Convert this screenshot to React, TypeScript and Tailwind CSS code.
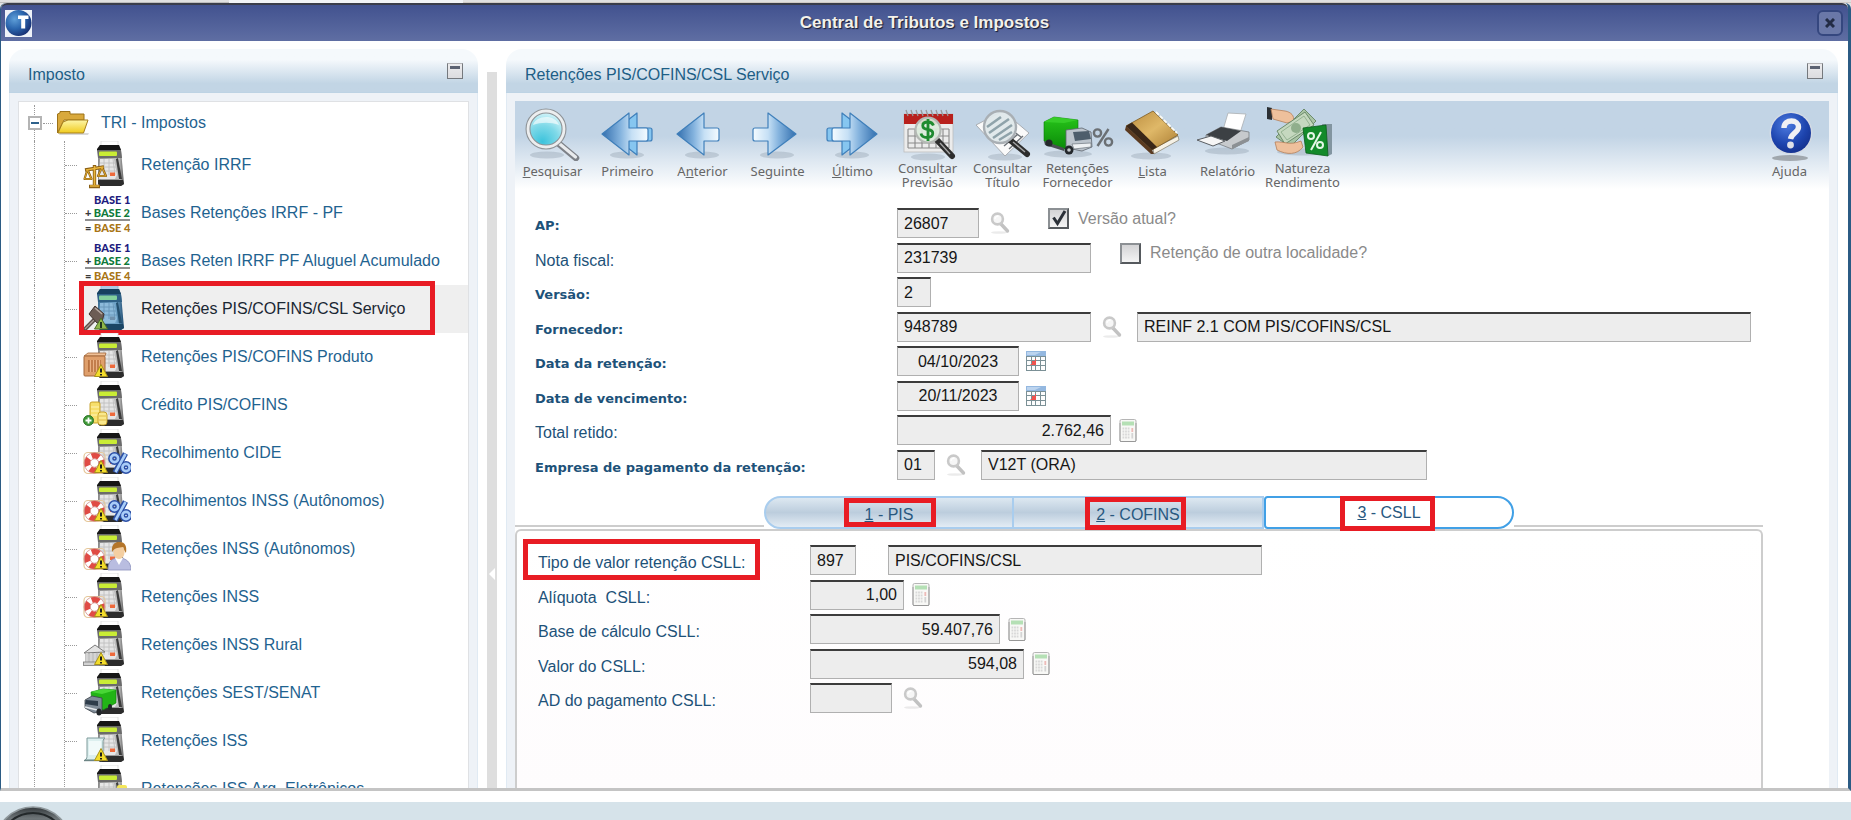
import type { ReactNode } from "react";

type Badge =
  | "scale"
  | "hammer"
  | "crate"
  | "coins"
  | "percent"
  | "person"
  | "buoy"
  | "bank"
  | "truck"
  | "scroll"
  | "files";

type TreeItem = { label: string; icon: "bases" | Badge; selected?: boolean };

const TREE: TreeItem[] = [
  { label: "Retenção IRRF", icon: "scale" },
  { label: "Bases Retenções IRRF - PF", icon: "bases" },
  { label: "Bases Reten IRRF PF Aluguel Acumulado", icon: "bases" },
  { label: "Retenções PIS/COFINS/CSL Serviço", icon: "hammer", selected: true },
  { label: "Retenções PIS/COFINS Produto", icon: "crate" },
  { label: "Crédito PIS/COFINS", icon: "coins" },
  { label: "Recolhimento CIDE", icon: "percent" },
  { label: "Recolhimentos INSS (Autônomos)", icon: "percent" },
  { label: "Retenções INSS (Autônomos)", icon: "person" },
  { label: "Retenções INSS", icon: "buoy" },
  { label: "Retenções INSS Rural", icon: "bank" },
  { label: "Retenções SEST/SENAT", icon: "truck" },
  { label: "Retenções ISS", icon: "scroll" },
  { label: "Retenções ISS Arq. Eletrônicos", icon: "files" },
];

/* ---------- shared gradients ---------- */

function Gradients() {
  return (
    <svg className="absolute h-0 w-0" aria-hidden="true">
      <defs>
        <linearGradient id="arrowFwd" x1="0" x2="1">
          <stop offset="0" stopColor="#f4fbff" />
          <stop offset="0.35" stopColor="#c6e0f5" />
          <stop offset="0.6" stopColor="#84b3de" />
          <stop offset="1" stopColor="#336fae" />
        </linearGradient>
        <linearGradient id="arrowBack" x1="1" x2="0">
          <stop offset="0" stopColor="#f4fbff" />
          <stop offset="0.35" stopColor="#c6e0f5" />
          <stop offset="0.6" stopColor="#84b3de" />
          <stop offset="1" stopColor="#336fae" />
        </linearGradient>
        <radialGradient id="lens" cx="0.4" cy="0.85" r="0.9">
          <stop offset="0" stopColor="#3cc3dc" />
          <stop offset="0.5" stopColor="#7fd9e8" />
          <stop offset="1" stopColor="#e6fafd" />
        </radialGradient>
        <linearGradient id="greenBox" x1="0" y1="0" x2="0" y2="1">
          <stop offset="0" stopColor="#27c41a" />
          <stop offset="1" stopColor="#0a8a08" />
        </linearGradient>
        <linearGradient id="bookCover" x1="0" y1="0" x2="1" y2="1">
          <stop offset="0" stopColor="#b98a3c" />
          <stop offset="0.5" stopColor="#dfb868" />
          <stop offset="1" stopColor="#a87a30" />
        </linearGradient>
        <radialGradient id="helpBall" cx="0.4" cy="0.3" r="0.8">
          <stop offset="0" stopColor="#4d7be0" />
          <stop offset="0.6" stopColor="#1d44ae" />
          <stop offset="1" stopColor="#122c86" />
        </radialGradient>
        <linearGradient id="folderFront" x1="0" y1="0" x2="0" y2="1">
          <stop offset="0" stopColor="#fdf6a8" />
          <stop offset="1" stopColor="#f0cb1e" />
        </linearGradient>
        <linearGradient id="posBody" x1="0" x2="1">
          <stop offset="0" stopColor="#8a8a8a" />
          <stop offset="0.8" stopColor="#c4c4c4" />
          <stop offset="1" stopColor="#5a5a5a" />
        </linearGradient>
        <linearGradient id="posBodyBlue" x1="0" x2="1">
          <stop offset="0" stopColor="#3f7196" />
          <stop offset="0.7" stopColor="#6fa3c8" />
          <stop offset="1" stopColor="#1f4c70" />
        </linearGradient>
        <radialGradient id="globe" cx="0.35" cy="0.35" r="0.75">
          <stop offset="0" stopColor="#5f9fd8" />
          <stop offset="0.5" stopColor="#2b66ae" />
          <stop offset="1" stopColor="#14286a" />
        </radialGradient>
        <linearGradient id="badgeBall" x1="0" y1="0" x2="0" y2="1">
          <stop offset="0" stopColor="#33383b" />
          <stop offset="0.15" stopColor="#6e7578" />
          <stop offset="0.45" stopColor="#3c4245" />
          <stop offset="1" stopColor="#16191b" />
        </linearGradient>
      </defs>
    </svg>
  );
}

/* ---------- tree icons ---------- */

function Warning() {
  return (
    <g>
      <path d="M18 31.500 L24.500 43.500 H11.500 Z" fill="#f3dd2b" stroke="#a8921a" strokeWidth="1" strokeLinejoin="round" />
      <path d="M18 35.500v4M18 41v1.600" stroke="#1c1c1c" strokeWidth="2" />
    </g>
  );
}

function Buoy() {
  return (
    <g>
      <rect x="1" y="23.500" width="21" height="21" rx="4" fill="none" stroke="#e5c79a" strokeWidth="1.200" />
      <circle cx="11.500" cy="34" r="7.300" fill="none" stroke="#fff" strokeWidth="6.400" />
      <circle cx="11.500" cy="34" r="7.300" fill="none" stroke="#e04b44" strokeWidth="5.800" strokeDasharray="7.600 3.870" strokeDashoffset="3" />
      <circle cx="11.500" cy="34" r="10.400" fill="none" stroke="#c9807a" strokeWidth="0.700" />
      <circle cx="11.500" cy="34" r="4.200" fill="none" stroke="#c9807a" strokeWidth="0.700" />
    </g>
  );
}

function BadgeArt({ kind }: { kind: Badge }) {
  switch (kind) {
    case "scale":
      return (
        <g fill="none" stroke="#8a5f14" strokeWidth="3.400" strokeLinejoin="round">
          <path d="M11.500 24v20M2 29l19-3M6 45.500h11" />
          <path d="M4.500 28.500L1.500 38h7zM19 26l-4 9h8z" strokeWidth="2.200" />
          <path d="M11.500 25v19M3 29l17.500-3M7 45h9" stroke="#e9b53c" strokeWidth="1.700" />
          <path d="M4.500 29L1.500 38h7zM19 26.500l-4 8.500h8z" stroke="#e0a92f" strokeWidth="1" />
        </g>
      );
    case "hammer":
      return (
        <g>
          <path d="M1 45L13 33" stroke="#5c4f4a" strokeWidth="4" />
          <path d="M2 44L13 33" stroke="#a79a93" strokeWidth="1.200" />
          <path d="M12 21l9 8-2 8-5 1-8-9z" fill="#6c5c55" stroke="#40342f" strokeWidth="1" />
          <path d="M12 23l7 6" stroke="#b7a9a2" strokeWidth="1.500" />
          <path d="M18 33l6.500 11h-13z" fill="#8fb84a" stroke="#4d6b2a" />
          <path d="M18 37v6" stroke="#16261a" strokeWidth="1.800" />
        </g>
      );
    case "crate":
      return (
        <g>
          <path d="M1 23l4-3h18l-1 3z" fill="#f0c096" stroke="#a3673a" strokeWidth="0.800" />
          <rect x="1" y="23" width="21" height="20" rx="1" fill="#df9f6b" stroke="#a3673a" />
          <rect x="5" y="27" width="13" height="12" fill="#b8713f" />
          <path d="M7.500 27v12M10.500 27v12M13.500 27v12M16.500 27v12" stroke="#e9b184" strokeWidth="1.400" />
          <Warning />
        </g>
      );
    case "coins":
      return (
        <g stroke="#c39a1d" strokeWidth="0.900">
          <rect x="7" y="21" width="10" height="21" rx="2" fill="#f7df6c" />
          <path d="M8 26h8M8 30h8M8 34h8" stroke="#fff6c0" />
          <rect x="15" y="31" width="9" height="13" rx="3" fill="#f9e88c" />
          <path d="M16 35h7M16 39h7" stroke="#dcb740" />
          <circle cx="5.500" cy="39.500" r="5" fill="#3f9a37" stroke="#256a20" />
          <path d="M5.500 36.500v6M2.500 39.500h6" stroke="#fff" strokeWidth="1.800" />
        </g>
      );
    case "percent":
      return (
        <g>
          <Buoy />
          <Warning />
          <g fill="none" stroke="#2b4fa6" strokeWidth="5.600">
            <circle cx="31.500" cy="29.500" r="3.600" />
            <circle cx="43" cy="38.500" r="3.600" />
            <path d="M42.500 24.500L32 43.500" />
          </g>
          <g fill="none" stroke="#a9cdf8" strokeWidth="2.600">
            <circle cx="31.500" cy="29.500" r="3.600" />
            <circle cx="43" cy="38.500" r="3.600" />
            <path d="M42.500 25L32.500 43" />
          </g>
        </g>
      );
    case "person":
      return (
        <g>
          <Buoy />
          <Warning />
          <path d="M25 45c0-9 4-12 11-12s12 4 12 12z" fill="#b9bde0" stroke="#8a8fbc" strokeWidth="0.800" />
          <path d="M32 33l4 7 4-7z" fill="#fff" />
          <ellipse cx="36" cy="27" rx="5.600" ry="7" fill="#f4cfa2" />
          <path d="M29 27c-1-9 4-10 8-10 5 0 7 4 6 11-2-2-2-5-3-6-4 1-8 0-11 5z" fill="#b5762a" />
        </g>
      );
    case "buoy":
      return (
        <g>
          <Buoy />
          <Warning />
        </g>
      );
    case "bank":
      return (
        <g>
          <path d="M1 32l11-8 10 7z" fill="#e3e3e3" stroke="#7a7a7a" strokeWidth="1" />
          <path d="M4 32v9M8 32v9M12 32v9M16 32v9" stroke="#8b8b8b" strokeWidth="3" />
          <path d="M4 32v9M8 32v9M12 32v9M16 32v9" stroke="#f2f2f2" strokeWidth="1.400" />
          <rect x="0.500" y="41" width="21" height="3.500" fill="#d2d2d2" stroke="#7a7a7a" strokeWidth="0.800" />
          <Warning />
        </g>
      );
    case "truck":
      return (
        <g>
          <path d="M8 23l12-3 13 1v13l-13 7-11-7z" fill="#22b416" stroke="#0d7d0a" strokeWidth="0.600" />
          <path d="M8 23l12-3 13 1-14 4z" fill="#48d636" />
          <path d="M2 31l7-4 10 2v13l-8 2-9-5z" fill="#7f8b97" stroke="#3a4148" strokeWidth="0.800" />
          <path d="M3 31l12 1v5L2 35z" fill="#2e3c4a" />
          <path d="M2 38l12 3" stroke="#e4e8ec" strokeWidth="1.600" />
          <ellipse cx="16" cy="43" rx="2.600" ry="3.600" fill="#22262a" />
          <ellipse cx="27" cy="38" rx="2" ry="3" fill="#22262a" />
        </g>
      );
    case "scroll":
      return (
        <g>
          <path d="M4 21h18c-2 1-2 3-2 5v17H2c2-1 2-3 2-5z" fill="#dcefef" stroke="#7d9a9a" strokeWidth="1" />
          <path d="M6 24h12v14H6z" fill="#f1fafa" />
          <path d="M1 43.500h18" stroke="#6d8585" strokeWidth="1.400" />
          <Warning />
        </g>
      );
    case "files":
      return (
        <g>
          <rect x="34" y="20" width="10" height="20" rx="2" fill="#f4e65a" />
          <rect x="2" y="26" width="20" height="18" fill="#e6eef3" stroke="#8296a3" />
        </g>
      );
  }
}

function TerminalIcon({ badge, tinted }: { badge: Badge; tinted?: boolean }) {
  return (
    <svg viewBox="0 0 48 48" className="h-12 w-12" aria-hidden="true">
      <rect x="18" y="0" width="17" height="6" fill={tinted ? "#a9cbe6" : "#fff"} stroke={tinted ? "#8fb6d6" : "#d9d9d9"} strokeWidth="0.800" />
      <path d="M17 4h19l2 5 3 34-3 2H17l-2-2V8z" fill={tinted ? "url(#posBodyBlue)" : "url(#posBody)"} />
      <path d="M17 4h19l2 5v1H14V8z" fill={tinted ? "#17415f" : "#161616"} />
      <path d="M14 9h24l1 8H15z" fill={tinted ? "#2f6186" : "#6b6b6b"} />
      <rect x="16" y="10.500" width="18" height="4.500" rx="1" fill={tinted ? "#83d09c" : "#c9ec35"} />
      <path d="M17 18h14l3 16-2 4H16z" fill={tinted ? "#8dbbdb" : "#e6e6e6"} />
      <path d="M17 22h15M17 26h16M17 30h17M21 18v16M26 18v16M30 18l2 16" stroke={tinted ? "#6795b8" : "#c0c0c0"} strokeWidth="0.900" />
      <path d="M33 18l2-1 4 21h-3z" fill={tinted ? "#24506f" : "#3c3c3c"} />
      <rect x="27" y="31.500" width="5" height="3.500" fill={tinted ? "#6f91ad" : "#ee6a3c"} />
      <path d="M15 39h25l1 4-3 2H17l-2-2z" fill={tinted ? "#1b4564" : "#2c2c2c"} />
      <path d="M18 38.500h18" stroke={tinted ? "#6ea0c4" : "#9a9a9a"} strokeWidth="1" />
      <BadgeArt kind={badge} />
    </svg>
  );
}

function BasesIcon() {
  return (
    <div className="flex h-12 w-12 flex-col pt-1 pl-0.5 font-['Lato',sans-serif] text-[11px] font-black leading-[13px] whitespace-nowrap">
      <span className="pl-[9px] text-[#1c1c7e]">BASE 1</span>
      <span className="flex w-[45px] gap-0.5 border-b-2 border-[#909090] text-[#0f7a3a]">
        <span className="w-[7px] text-[#3a3a3a]">+</span>BASE 2
      </span>
      <span className="flex gap-0.5 text-[#a87516]">
        <span className="w-[7px] text-[#3a3a3a]">=</span>BASE 4
      </span>
    </div>
  );
}

function FolderIcon() {
  return (
    <svg viewBox="0 0 34 28" className="h-7 w-[34px]" aria-hidden="true">
      <path d="M3 26L32 26l1-2-29 0z" fill="#000" opacity="0.150" />
      <path d="M1.500 24V5l2.500-1V2.500h10V5h14v6H8z" fill="#d9a93c" stroke="#9c7218" strokeWidth="1" strokeLinejoin="round" />
      <path d="M2 24l5-11 5-2h20l-4.500 13z" fill="url(#folderFront)" stroke="#a67f1c" strokeWidth="1" strokeLinejoin="round" />
    </svg>
  );
}

/* ---------- toolbar icons ---------- */

function Tool({ children }: { children: ReactNode }) {
  return (
    <svg viewBox="0 0 75 56" className="h-14 w-[75px]" aria-hidden="true">
      {children}
    </svg>
  );
}

const Shadow = ({ cx = 37, rx = 17, cy = 50 }: { cx?: number; rx?: number; cy?: number }) => (
  <ellipse cx={cx} cy={cy} rx={rx} ry="3.500" fill="#6a7a8a" opacity="0.250" />
);

const SearchArt = () => (
  <Tool>
    <Shadow cx={32} />
    <path d="M43 38L61 53" stroke="#7d8187" strokeWidth="6.500" strokeLinecap="round" />
    <path d="M43 37.500L60.500 52" stroke="#e9ebed" strokeWidth="3.200" strokeLinecap="round" />
    <circle cx="31" cy="24" r="18" fill="url(#lens)" stroke="#8e9397" strokeWidth="5" />
    <circle cx="31" cy="24" r="18" fill="none" stroke="#eceeef" strokeWidth="2.800" />
    <path d="M18 20c3-10 22-11 26 0-8-3-18-3-26 0z" fill="#fff" opacity="0.600" />
  </Tool>
);

const arrowStroke = { stroke: "#3f7fba", strokeWidth: 1.2, strokeLinejoin: "round" as const };

const FirstArt = () => (
  <Tool>
    <Shadow />
    <path d="M47 8v15h13q2 0 2 2v9q0 2-2 2H47v14L20 29z" fill="#86c6f0" {...arrowStroke} />
    <path d="M39 8v15h17q2 0 2 2v9q0 2-2 2H39v14L12 29z" fill="url(#arrowBack)" {...arrowStroke} />
  </Tool>
);

const PrevArt = () => (
  <Tool>
    <Shadow />
    <path d="M39 8v15h13q2 0 2 2v9q0 2-2 2H39v14L12 29z" fill="url(#arrowBack)" {...arrowStroke} />
  </Tool>
);

const NextArt = () => (
  <Tool>
    <Shadow />
    <path d="M28 8v15H15q-2 0-2 2v9q0 2 2 2h13v14l28-21z" fill="url(#arrowFwd)" {...arrowStroke} />
  </Tool>
);

const LastArt = () => (
  <Tool>
    <Shadow />
    <path d="M27 8v15H14q-2 0-2 2v9q0 2 2 2h13v14l27-21z" fill="#86c6f0" {...arrowStroke} />
    <path d="M35 8v15H19q-2 0-2 2v9q0 2 2 2h16v14l27-21z" fill="url(#arrowFwd)" {...arrowStroke} />
  </Tool>
);

const ForecastArt = () => (
  <Tool>
    <Shadow cx={38} cy={52} />
    <rect x="14" y="9" width="49" height="38" fill="#ececec" stroke="#bdbdbd" strokeWidth="0.800" />
    <path d="M14 9h49v10H14z" fill="#b8201c" />
    <path d="M16 5l2 6M21 5l2 6M26 5l2 6M31 5l2 6M36 5l2 6M41 5l2 6M46 5l2 6M51 5l2 6M56 5l2 6" stroke="#9a9a9a" strokeWidth="1.300" />
    <path d="M18 24h41M18 31h41M18 38h41M18 43h41M18 24v19M25 24v19M32 24v19M39 24v19M46 24v19M53 24v19M59 24v19" stroke="#8a8a8a" strokeWidth="1.100" />
    <path d="M47 35L62 51" stroke="#2d2d2d" strokeWidth="6" strokeLinecap="round" />
    <path d="M50 38l10 11" stroke="#a5a5a5" strokeWidth="1.400" />
    <circle cx="38" cy="25" r="12.500" fill="#dcebdc" fillOpacity="0.920" stroke="#b4b8b4" strokeWidth="2.200" />
    <path d="M43.500 20.500c-1-2.500-3-3.500-5.500-3.500-7 0-7 7 0 7.500 7 1 6 8-1 8-3.500 0-5.500-1.500-6-4M38 14v22" fill="none" stroke="#1f8b30" strokeWidth="2.800" />
  </Tool>
);

const TitleArt = () => (
  <Tool>
    <Shadow cx={40} cy={52} />
    <path d="M11 20L38 6l26 22-24 23z" fill="#fafafa" stroke="#a9adb2" strokeWidth="1" />
    <path d="M39 41l14-12M44 44l14-13M48 26l8 6" stroke="#6d7278" strokeWidth="1.400" />
    <path d="M45 35L62 49" stroke="#2d2d2d" strokeWidth="6" strokeLinecap="round" />
    <path d="M48 37l12 10" stroke="#a5a5a5" strokeWidth="1.400" />
    <circle cx="35" cy="22" r="16" fill="#dfe8ea" fillOpacity="0.950" stroke="#a9afb4" strokeWidth="2.400" />
    <path d="M22 22l14-10M24 28l20-14M28 33l19-13M34 35l13-8" stroke="#8fa3aa" strokeWidth="2.600" />
  </Tool>
);

const TruckArt = () => (
  <Tool>
    <Shadow cx={28} rx={24} cy={49} />
    <path d="M4 17l10-5 24 3v27l-14 2L4 36z" fill="url(#greenBox)" stroke="#0b7a0a" strokeWidth="0.600" />
    <path d="M4 17l10-5 24 3-14 3z" fill="#35cc28" />
    <path d="M4 36l20 7v3L5 40z" fill="#4a4f54" />
    <path d="M26 25l16-2 9 4 1 15-10 4-16-3z" fill="#bcc4cc" stroke="#5d656d" strokeWidth="0.800" />
    <path d="M33 27l16-1 2 8-16 2z" fill="#4d5d6b" />
    <path d="M32 39l19-1v4l-17 2z" fill="#eef1f3" stroke="#5d656d" strokeWidth="0.600" />
    <circle cx="29" cy="45" r="4.500" fill="#24282c" />
    <circle cx="29" cy="45" r="1.800" fill="#c3c8cc" />
    <circle cx="9" cy="38" r="3.500" fill="#24282c" />
    <g fill="none" stroke="#6b7074" strokeWidth="2.400">
      <circle cx="57.500" cy="28" r="3.600" />
      <circle cx="68.500" cy="37" r="3.600" />
      <path d="M68.500 24L57.500 41" />
    </g>
  </Tool>
);

const BookArt = () => (
  <Tool>
    <Shadow cx={36} cy={51} rx={20} />
    <path d="M38 44l25-13 1 4-25 14z" fill="#f5f1e6" stroke="#8c8776" strokeWidth="0.800" />
    <path d="M11 21L38 6l25 24-26 15z" fill="url(#bookCover)" stroke="#7c5a22" strokeWidth="0.800" />
    <path d="M41 7l21 21" stroke="#fdfbf4" strokeWidth="1.800" strokeDasharray="4 1.500" />
    <path d="M11 21l-1 4 26 24 3 0-2-4z" fill="#5a3a20" />
    <path d="M11 21l6-3.500L42 42l-5 3z" fill="#3a2718" />
  </Tool>
);

const PrinterArt = () => (
  <Tool>
    <Shadow cx={37} cy={46} rx={22} />
    <path d="M38 8l18 1-6 19-17-3z" fill="#fff" stroke="#b0b4b8" strokeWidth="0.900" />
    <path d="M16 30l15-8 28 5v8L42 44 16 34z" fill="#c7cacd" stroke="#7a7e82" strokeWidth="0.800" />
    <path d="M16 30l15-8 20 4-14 10z" fill="#3c4044" />
    <path d="M7 35l14-4 14 5-12 5z" fill="#f6f6f6" stroke="#5b5f63" strokeWidth="1" />
    <path d="M42 40l17-8v4L42 44z" fill="#8c9094" />
  </Tool>
);

const MoneyArt = () => (
  <Tool>
    <Shadow cx={38} cy={47} rx={26} />
    <path d="M2 2l5 1v12l-5-1z" fill="#2b2f33" />
    <path d="M6 4l14 2c6 1 10 5 8 10l-6 2-14-4z" fill="#eec09c" stroke="#b5805a" strokeWidth="0.800" />
    <path d="M11 32l28-28 12 12-26 26z" fill="#a9c4a5" stroke="#6d8c6c" strokeWidth="1" />
    <path d="M12 26l28-19 9 13-29 19z" fill="#c5d8bf" stroke="#6d8c6c" strokeWidth="1" />
    <path d="M16 27l23-16 6 9-23 15z" fill="none" stroke="#8fae8c" strokeWidth="0.900" />
    <circle cx="31" cy="23" r="5" fill="#8fae8c" />
    <path d="M10 37c9-1 14 4 26-1l2 6c-6 8-16 8-26 3z" fill="#eec09c" stroke="#b5805a" strokeWidth="0.800" />
    <path d="M57 19l10 0v30l-4 2z" fill="#8295a0" />
    <path d="M38 23l23-3 2 31-22-3z" fill="#138a2a" stroke="#0a5e1a" strokeWidth="0.800" />
    <g fill="none" stroke="#e4f7e6" strokeWidth="2">
      <circle cx="46" cy="31" r="3" />
      <circle cx="55" cy="40" r="3" />
      <path d="M56 27L46 45" />
    </g>
  </Tool>
);

const HelpArt = () => (
  <Tool>
    <ellipse cx="38" cy="53" rx="18" ry="3" fill="#333" opacity="0.350" />
    <circle cx="39" cy="28" r="21.500" fill="#d3dae4" />
    <circle cx="39" cy="28" r="20" fill="url(#helpBall)" />
    <path d="M32 23c0-5 3.500-7 7.500-7s7 2.500 7 6c0 5.500-7 6-8 12" fill="none" stroke="#f1f1f4" strokeWidth="5.400" />
    <circle cx="38.500" cy="40" r="3.400" fill="#dfe1e8" />
  </Tool>
);

type ToolDef = { lines: ReactNode[]; art: ReactNode };

const TOOLS: ToolDef[] = [
  { lines: [<><u>P</u>esquisar</>], art: <SearchArt /> },
  { lines: ["Primeiro"], art: <FirstArt /> },
  { lines: [<>A<u>n</u>terior</>], art: <PrevArt /> },
  { lines: [<>Se<u>g</u>uinte</>], art: <NextArt /> },
  { lines: [<><u>Ú</u>ltimo</>], art: <LastArt /> },
  { lines: ["Consultar", "Previsão"], art: <ForecastArt /> },
  { lines: ["Consultar", "Título"], art: <TitleArt /> },
  { lines: ["Retenções", "Fornecedor"], art: <TruckArt /> },
  { lines: [<><u>L</u>ista</>], art: <BookArt /> },
  { lines: ["Relatório"], art: <PrinterArt /> },
  { lines: ["Natureza", "Rendimento"], art: <MoneyArt /> },
];

function ToolButton({ lines, art }: ToolDef) {
  return (
    <button
      type="button"
      className="flex w-[75px] shrink-0 flex-col items-center font-['Noto_Sans',sans-serif] text-[13px] leading-[14px] text-[#666]"
    >
      {art}
      <span className={lines.length === 1 ? "flex flex-col pt-[3px]" : "flex flex-col"}>
        {lines.map((line, i) => (
          <span key={i}>{line}</span>
        ))}
      </span>
    </button>
  );
}

/* ---------- field icons ---------- */

function LookupButton({ label }: { label: string }) {
  return (
    <button type="button" aria-label={label} className="shrink-0">
      <svg viewBox="0 0 20 22" className="h-[22px] w-5">
        <ellipse cx="9" cy="20.500" rx="8" ry="1.300" fill="#000" opacity="0.080" />
        <path d="M11 12l6.500 7" stroke="#c2c2c2" strokeWidth="3.400" strokeLinecap="round" />
        <circle cx="7.500" cy="7" r="5.400" fill="#f6f6f6" stroke="#c9c9c9" strokeWidth="2.600" />
        <path d="M5 7c0-2 2-3 3.500-3" stroke="#fff" strokeWidth="1.300" fill="none" />
      </svg>
    </button>
  );
}

function CalendarButton({ label }: { label: string }) {
  return (
    <button type="button" aria-label={label} className="shrink-0">
      <svg viewBox="0 0 20 20" className="size-5">
        <rect width="20" height="20" fill="#7b9096" />
        <rect width="20" height="5" fill="#94b8e0" />
        <path d="M1 1h14L9 4H1z" fill="#bcd4ef" />
        <g fill="#fdfdfd">
          <rect x="1" y="6" width="4" height="3" />
          <rect x="6" y="6" width="3" height="3" />
          <rect x="10" y="6" width="4" height="3" />
          <rect x="15" y="6" width="4" height="3" />
          <rect x="1" y="10" width="4" height="4" />
          <rect x="10" y="10" width="4" height="4" />
          <rect x="15" y="10" width="4" height="4" />
          <rect x="1" y="15" width="4" height="4" />
          <rect x="6" y="15" width="3" height="4" />
          <rect x="10" y="15" width="4" height="4" />
          <rect x="15" y="15" width="4" height="4" />
        </g>
        <path d="M6 10h3V8h1v6H4.500v-1H6z" fill="#f0524e" />
      </svg>
    </button>
  );
}

function CalculatorButton({ label }: { label: string }) {
  return (
    <button type="button" aria-label={label} className="shrink-0">
      <svg viewBox="0 0 18 23" className="h-[23px] w-[18px]">
        <rect x="1" y="0.500" width="16" height="22" rx="1.500" fill="#f8f8f6" stroke="#b5b5b5" strokeWidth="1" />
        <path d="M1 22.500h16M1 4v18M17 4v18" stroke="#8a8a8a" strokeWidth="0.700" />
        <rect x="3" y="2.500" width="12" height="4" fill="#b5e0b5" />
        <path d="M3.500 9.500h7M3.500 12.500h7M3.500 15.500h7M3.500 18.500h7" stroke="#d8d8d8" strokeWidth="1.800" strokeDasharray="1.800 0.800" />
        <path d="M13.300 9v4" stroke="#eebbb8" strokeWidth="1.800" />
        <path d="M13.300 14v5.500" stroke="#d4d4d4" strokeWidth="1.800" />
      </svg>
    </button>
  );
}

/* ---------- form building blocks ---------- */

function Field({
  id,
  value,
  width,
  align = "text-left",
  label,
}: {
  id: string;
  value: string;
  width: string;
  align?: string;
  label?: string;
}) {
  return (
    <input
      id={id}
      aria-label={label}
      readOnly
      defaultValue={value}
      className={`h-[30px] min-w-0 rounded-none border border-t-2 border-[#b0b0b0] border-t-[#3c3c3c] bg-[#ededed] px-1.5 text-base text-[#161616] outline-none ${align} ${width}`}
    />
  );
}

function Row({
  id,
  label,
  bold,
  labelWidth = "w-[362px]",
  boxed,
  children,
}: {
  id: string;
  label: string;
  bold?: boolean;
  labelWidth?: string;
  boxed?: boolean;
  children: ReactNode;
}) {
  return (
    <div className="flex h-[30px] items-center">
      <label
        htmlFor={id}
        className={`relative shrink-0 whitespace-pre pt-1.5 text-[#1d5279] ${labelWidth} ${
          bold ? "font-['DejaVu_Sans',sans-serif] text-[13px] font-bold" : "text-base"
        }`}
      >
        {label}
        {boxed && <span className="pointer-events-none absolute -top-1.5 -left-[15px] h-[41px] w-[237px] border-[5px] border-[#e81c24]" />}
      </label>
      {children}
    </div>
  );
}

function Check({ id, label, checked }: { id: string; label: string; checked?: boolean }) {
  return (
    <div className="flex items-center gap-[9px] self-start">
      <span className="relative flex size-[21px]">
        <input
          id={id}
          type="checkbox"
          defaultChecked={checked}
          className="size-[21px] appearance-none border-2 border-[#55595d] border-t-[#8c9094] border-l-[#8c9094] bg-linear-to-b from-[#d4d4d6] to-[#f4f4f4]"
        />
        {checked && (
          <svg viewBox="0 0 21 21" className="pointer-events-none absolute inset-0 size-[21px]">
            <path d="M5.500 9.500l4 6L17 3" fill="none" stroke="#2b3038" strokeWidth="3" />
          </svg>
        )}
      </span>
      <label htmlFor={id} className="text-base leading-5 whitespace-nowrap text-[#8a8a8a]">
        {label}
      </label>
    </div>
  );
}

function Panel({ title, className, children }: { title: string; className: string; children: ReactNode }) {
  return (
    <section className={`flex min-h-0 flex-col ${className}`}>
      <header className="flex h-11 shrink-0 items-start justify-between rounded-t-2xl border-b border-[#bdd3e4] bg-linear-to-b from-[#f5f9fc] from-25% to-[#c2d5e5] to-80% pt-3.5 pr-[15px] pl-[19px]">
        <h2 className="text-base leading-6 text-[#1d5e86]">{title}</h2>
        <button
          type="button"
          aria-label={`Minimizar ${title}`}
          className="flex size-4 justify-center border border-[#75797e] border-t-[#b5b5b8] bg-linear-to-b from-[#ececee] to-[#dcdcdf] pt-0.5"
        >
          <span className="h-[3px] w-2.5 bg-[#5b6272]" />
        </button>
      </header>
      <div className="flex min-h-0 flex-1 flex-col border-x border-[#e0eaf3] bg-[#eef2f7] px-2 pt-2">{children}</div>
    </section>
  );
}

function Tree() {
  return (
    <div className="min-h-0 flex-1 overflow-hidden border border-b-0 border-[#dfe1e4] bg-white pt-[3px] pl-[15px]">
      <div className="relative flex h-9 items-center border-l border-dotted border-[#9a9a9a] pl-2">
        <button
          type="button"
          aria-label="Recolher TRI - Impostos"
          className="absolute top-[11px] -left-[7px] flex size-3.5 items-center justify-center border-2 border-[#b4b4b4] bg-white"
        >
          <span className="h-0.5 w-2 bg-[#2d618b]" />
        </button>
        <span className="w-2.5 border-t border-dotted border-[#9a9a9a]" />
        <span className="ml-[3px]">
          <FolderIcon />
        </span>
        <span className="ml-[11px] text-base text-[#1f6390]">TRI - Impostos</span>
      </div>
      <ul>
        {TREE.map((item) => (
          <li key={item.label} className="flex h-12 border-l border-dotted border-[#9a9a9a] pl-[29px]">
            <span className="flex w-[19px] items-center border-l border-dotted border-[#9a9a9a]">
              <span className="w-3 border-t border-dotted border-[#9a9a9a]" />
            </span>
            <a
              href="#"
              className={`relative flex flex-1 items-center gap-2.5 text-base whitespace-nowrap ${
                item.selected ? "bg-[#efefef] text-[#1a2733]" : "text-[#1f6390]"
              }`}
            >
              {item.icon === "bases" ? <BasesIcon /> : <TerminalIcon badge={item.icon} tinted={item.selected} />}
              <span>{item.label}</span>
              {item.selected && (
                <span className="pointer-events-none absolute -top-1 -left-1 h-[54px] w-[356px] border-[5px] border-[#e81c24]" />
              )}
            </a>
          </li>
        ))}
      </ul>
    </div>
  );
}

function TabMark({ className }: { className: string }) {
  return <span className={`pointer-events-none absolute border-[5px] border-[#e81c24] ${className}`} />;
}

function Tabs() {
  const tab =
    "relative w-[250px] border-2 border-[#a9cdee] bg-linear-to-b from-[#dde8f1] via-[#bccddd] via-50% to-[#e3ecf4] pt-1 text-base text-[#28587f]";
  return (
    <div className="flex h-[33px] shrink-0" role="tablist">
      <span className="mb-0.5 w-[249px] border-b-2 border-[#cdcdcd]" />
      <button type="button" role="tab" aria-selected="false" className={`${tab} rounded-l-[18px]`}>
        <u>1</u> - PIS
        <TabMark className="top-0 left-[78px] h-[29px] w-[92px]" />
      </button>
      <button type="button" role="tab" aria-selected="false" className={`${tab} border-l-0`}>
        <u>2</u> - COFINS
        <TabMark className="-top-px left-[71px] h-[33px] w-[101px]" />
      </button>
      <button
        type="button"
        role="tab"
        aria-selected="true"
        className="relative w-[250px] rounded-l-[4px] rounded-r-[18px] border-2 border-[#41a0e6] bg-white text-base text-[#28587f]"
      >
        <u>3</u> - CSLL
        <TabMark className="-top-0.5 left-[74px] h-[35px] w-[95px]" />
      </button>
      <span className="mb-0.5 flex-1 border-b-2 border-[#cdcdcd]" />
    </div>
  );
}

export default function App() {
  return (
    <div className="flex h-screen flex-col overflow-hidden bg-[#e3e3e3] font-['Liberation_Sans',Arial,sans-serif]">
      <Gradients />
      <div className="flex h-[3px] shrink-0 bg-[#e0e0e0]">
        <span className="w-[229px] border-b border-[#bdbdbd]" />
        <span className="flex-1 bg-[#f1f3f6]" />
        <span className="w-3/4 border-b border-[#cfcac5]" />
      </div>

      <div className="flex min-h-0 flex-1 flex-col rounded-t-md border-r-[3px] border-b-[3px] border-l border-[#2b5b84] border-b-[#c4c4c4] bg-white">
        <div className="flex h-[38px] shrink-0 items-center justify-between rounded-t-md border-t-2 border-[#3a3d4a] bg-linear-to-b from-[#42528f] to-[#5f6ea3] pr-[5px] pl-1">
          <svg viewBox="0 0 27 27" className="size-[27px]" aria-hidden="true">
            <rect width="27" height="27" fill="#eef2f8" />
            <circle cx="13.500" cy="13" r="13" fill="url(#globe)" />
            <path d="M13 5.500h10.500v3.500h-3.300v9.500h-4V9H13z" fill="#fff" />
          </svg>
          <h1 className="text-[17px] font-bold text-[#f3f1ea] [text-shadow:1px_1px_1px_#151a30]">
            Central de Tributos e Impostos
          </h1>
          <button
            type="button"
            aria-label="Fechar"
            className="flex size-[26px] items-center justify-center rounded-md border-2 border-[#35477f] bg-[#6a78a8]"
          >
            <svg viewBox="0 0 10 10" className="size-2.5">
              <path d="M1 1l8 8M9 1l-8 8" stroke="#232c45" strokeWidth="3" />
            </svg>
          </button>
        </div>

        <main className="flex min-h-0 flex-1 pt-2 pr-2.5 pl-2">
          <Panel title="Imposto" className="w-[469px] shrink-0">
            <Tree />
          </Panel>

          <div className="mx-[9px] mt-[23px] flex w-2.5 shrink-0 flex-col items-center justify-center bg-[#dedede]">
            <svg viewBox="0 0 8 12" className="mt-72 h-3 w-2" aria-hidden="true">
              <path d="M7 0v12L1 6z" fill="#fff" />
            </svg>
          </div>

          <Panel title="Retenções PIS/COFINS/CSL Serviço" className="min-w-0 flex-1">
            <div className="flex min-h-0 flex-1 flex-col bg-white">
              <div className="flex h-[88px] shrink-0 items-start justify-between bg-linear-to-b from-[#c2d4e5] from-40% to-white pt-1">
                <div className="flex">
                  {TOOLS.map((t, i) => (
                    <ToolButton key={i} {...t} />
                  ))}
                </div>
                <div className="pr-0.5">
                  <ToolButton lines={["Ajuda"]} art={<HelpArt />} />
                </div>
              </div>

              <form className="mt-[19px] grid h-[276px] shrink-0 grid-rows-8 pl-5">
                <Row id="ap" label="AP:" bold>
                  <Field id="ap" value="26807" width="w-[82px]" />
                  <span className="mx-[11px] flex">
                    <LookupButton label="Pesquisar AP" />
                  </span>
                  <span className="ml-[27px] self-start">
                    <Check id="versao-atual" label="Versão atual?" checked />
                  </span>
                </Row>
                <Row id="nota" label="Nota fiscal:">
                  <Field id="nota" value="231739" width="w-[194px]" />
                  <span className="ml-[29px] self-start">
                    <Check id="outra-localidade" label="Retenção de outra localidade?" />
                  </span>
                </Row>
                <Row id="versao" label="Versão:" bold>
                  <Field id="versao" value="2" width="w-[34px]" />
                </Row>
                <Row id="fornecedor" label="Fornecedor:" bold>
                  <Field id="fornecedor" value="948789" width="w-[194px]" />
                  <span className="mr-[15px] ml-[11px] flex">
                    <LookupButton label="Pesquisar fornecedor" />
                  </span>
                  <Field
                    id="fornecedor-nome"
                    label="Nome do fornecedor"
                    value="REINF 2.1 COM PIS/COFINS/CSL"
                    width="mr-[78px] flex-1"
                  />
                </Row>
                <Row id="data-retencao" label="Data da retenção:" bold>
                  <Field id="data-retencao" value="04/10/2023" width="mr-[7px] w-[122px]" align="text-center" />
                  <CalendarButton label="Escolher data da retenção" />
                </Row>
                <Row id="data-vencimento" label="Data de vencimento:" bold>
                  <Field id="data-vencimento" value="20/11/2023" width="mr-[7px] w-[122px]" align="text-center" />
                  <CalendarButton label="Escolher data de vencimento" />
                </Row>
                <Row id="total" label="Total retido:">
                  <Field id="total" value="2.762,46" width="mr-2 w-[214px]" align="text-right" />
                  <CalculatorButton label="Calcular total retido" />
                </Row>
                <Row id="empresa" label="Empresa de pagamento da retenção:" bold>
                  <Field id="empresa" value="01" width="w-[38px]" />
                  <span className="mr-[15px] ml-[11px] flex">
                    <LookupButton label="Pesquisar empresa" />
                  </span>
                  <Field id="empresa-nome" label="Nome da empresa" value="V12T (ORA)" width="w-[446px]" />
                </Row>
              </form>

              <div className="mt-3 mr-[66px] flex min-h-0 flex-1 flex-col">
                <Tabs />
                <div className="min-h-0 flex-1 overflow-hidden rounded-t-md border-2 border-b-0 border-[#cdcdcd] bg-linear-to-b from-white to-[#fefcfd] pt-3.5 pl-[21px]">
                  <div className="grid h-[207px] grid-rows-6">
                    <Row id="tipo" label="Tipo de valor retenção CSLL:" labelWidth="w-[272px]" boxed>
                      <Field id="tipo" value="897" width="mr-8 w-[46px]" />
                      <Field id="tipo-nome" label="Descrição do tipo" value="PIS/COFINS/CSL" width="w-[374px]" />
                    </Row>
                    <Row id="aliquota" label={"Alíquota  CSLL:"} labelWidth="w-[272px]">
                      <Field id="aliquota" value="1,00" width="mr-2 w-[94px]" align="text-right" />
                      <CalculatorButton label="Calcular alíquota" />
                    </Row>
                    <Row id="base" label="Base de cálculo CSLL:" labelWidth="w-[272px]">
                      <Field id="base" value="59.407,76" width="mr-2 w-[190px]" align="text-right" />
                      <CalculatorButton label="Calcular base" />
                    </Row>
                    <Row id="valor" label="Valor do CSLL:" labelWidth="w-[272px]">
                      <Field id="valor" value="594,08" width="mr-2 w-[214px]" align="text-right" />
                      <CalculatorButton label="Calcular valor" />
                    </Row>
                    <Row id="ad" label="AD do pagamento CSLL:" labelWidth="w-[272px]">
                      <Field id="ad" value="" width="mr-[11px] w-[82px]" />
                      <LookupButton label="Pesquisar AD" />
                    </Row>
                  </div>
                </div>
              </div>
            </div>
          </Panel>
        </main>
      </div>

      <footer className="h-[29px] shrink-0 overflow-hidden border-t-[11px] border-white bg-[#d6e3ea]">
        <svg viewBox="0 0 72 18" className="h-[18px] w-[72px]" aria-hidden="true">
          <circle cx="33" cy="43" r="38" fill="url(#badgeBall)" stroke="#8f989c" strokeWidth="1.500" />
          <circle cx="33" cy="45" r="34" fill="none" stroke="#23282a" strokeWidth="2" />
        </svg>
      </footer>
    </div>
  );
}
